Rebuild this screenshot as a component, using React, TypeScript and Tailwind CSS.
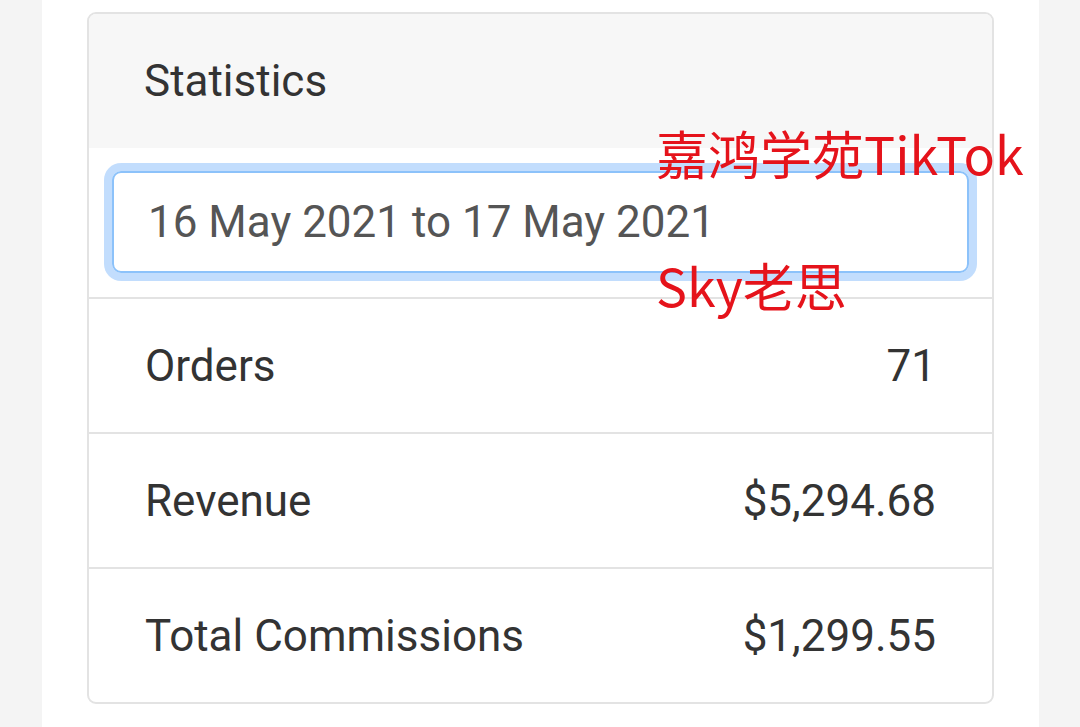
import React from "react";

const rows = [
  { label: "Orders", value: "71" },
  { label: "Revenue", value: "$5,294.68" },
  { label: "Total Commissions", value: "$1,299.55" },
];

export default function App() {
  return (
    <div className="relative w-[1080px] h-[727px] bg-[#f4f4f4] flex overflow-hidden" style={{ fontFamily: "Roboto, 'Noto Sans', sans-serif" }}>
      <div className="ml-[42px] w-[997px] h-full bg-white pt-[12px] pl-[45px]">
        <div className="w-[907px] border-2 border-[#e3e3e3] rounded-[9px] overflow-hidden bg-white">
          <div className="h-[134px] bg-[#f7f7f7] flex items-center pl-[55px] text-[44px] text-[#333333]">
            Statistics
          </div>
          <div className="h-[149px] px-[23px] pt-[23px]">
            <div className="h-[102px] border-2 border-[#8cc2fa] rounded-[9px] shadow-[0_0_0_8px_rgba(120,180,250,0.45)] flex items-center pl-[34px] text-[44px] text-[#555555]">
              16 May 2021 to 17 May 2021
            </div>
          </div>
          {rows.map((r) => (
            <div key={r.label} className="h-[135px] border-t-2 border-[#e3e3e3] flex items-center justify-between pl-[56px] pr-[56px] text-[44px] text-[#333333]">
              <span>{r.label}</span>
              <span>{r.value}</span>
            </div>
          ))}
        </div>
      </div>
      <div className="absolute left-[656px] top-[127px] text-[52px] leading-none text-[#e5131b]" style={{ fontFamily: "'Noto Sans CJK SC', 'Noto Sans', sans-serif" }}>
        嘉鸿学苑TikTok
      </div>
      <div className="absolute left-[656px] top-[259px] text-[52px] leading-none text-[#e5131b]" style={{ fontFamily: "'Noto Sans CJK SC', 'Noto Sans', sans-serif" }}>
        Sky老思
      </div>
    </div>
  );
}
